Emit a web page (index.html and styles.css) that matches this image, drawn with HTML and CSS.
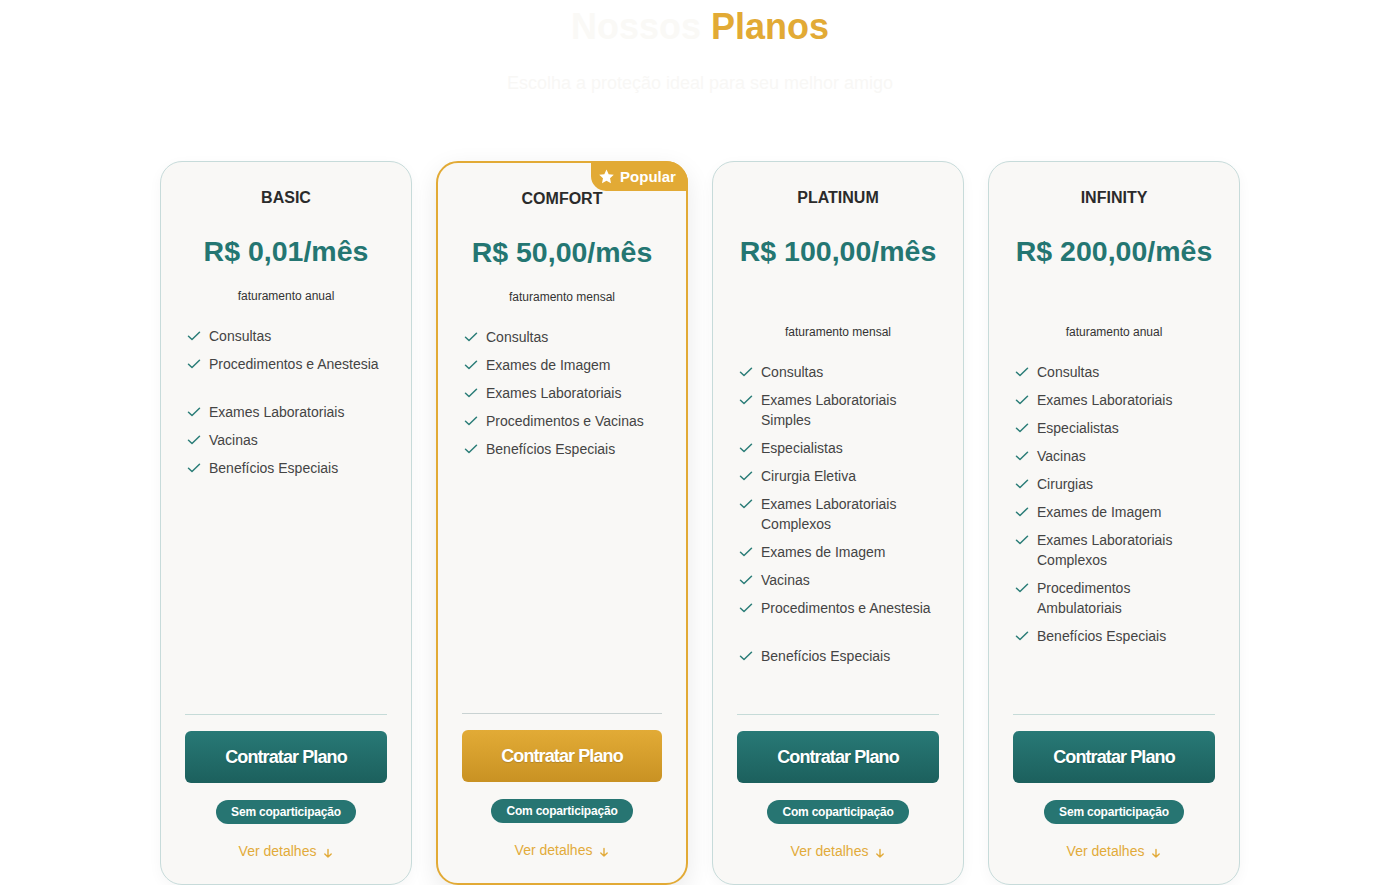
FILE: index.html
```html
<!DOCTYPE html>
<html lang="pt-BR">
<head>
<meta charset="utf-8">
<title>Nossos Planos</title>
<link rel="stylesheet" href="styles.css">
</head>
<body>
<section class="plans">
  <h2 class="plans-title"><span class="muted">Nossos</span> <span class="gold">Planos</span></h2>
  <p class="plans-sub">Escolha a proteção ideal para seu melhor amigo</p>

  <div class="cards">
    <!-- BASIC -->
    <article class="card">
      <h3 class="card-name">BASIC</h3>
      <div class="card-price">R$ 0,01/mês</div>
      <div class="card-billing">faturamento anual</div>
      <ul class="features">
        <li><svg class="chk" viewBox="0 0 14 14"><polyline points="1.5,7.2 5,10.5 12.5,3.2"/></svg><span>Consultas</span></li>
        <li><svg class="chk" viewBox="0 0 14 14"><polyline points="1.5,7.2 5,10.5 12.5,3.2"/></svg><span>Procedimentos e Anestesia<br>&nbsp;</span></li>
        <li><svg class="chk" viewBox="0 0 14 14"><polyline points="1.5,7.2 5,10.5 12.5,3.2"/></svg><span>Exames Laboratoriais</span></li>
        <li><svg class="chk" viewBox="0 0 14 14"><polyline points="1.5,7.2 5,10.5 12.5,3.2"/></svg><span>Vacinas</span></li>
        <li><svg class="chk" viewBox="0 0 14 14"><polyline points="1.5,7.2 5,10.5 12.5,3.2"/></svg><span>Benefícios Especiais</span></li>
      </ul>
      <div class="card-foot">
        <button class="btn">Contratar Plano</button>
        <span class="pill">Sem coparticipação</span>
        <a class="more" href="#">Ver detalhes <svg class="arrow" viewBox="0 0 10 10"><path d="M5 1.5V9M1.8 6L5 9L8.2 6"/></svg></a>
      </div>
    </article>

    <!-- COMFORT -->
    <article class="card card-popular">
      <div class="ribbon"><svg class="star" viewBox="2 2 20 19"><path d="M12 2.2l2.9 6.2 6.8.8-5 4.7 1.3 6.7L12 17.3l-6 3.3 1.3-6.7-5-4.7 6.8-.8z"/></svg>Popular</div>
      <h3 class="card-name">COMFORT</h3>
      <div class="card-price">R$ 50,00/mês</div>
      <div class="card-billing">faturamento mensal</div>
      <ul class="features">
        <li><svg class="chk" viewBox="0 0 14 14"><polyline points="1.5,7.2 5,10.5 12.5,3.2"/></svg><span>Consultas</span></li>
        <li><svg class="chk" viewBox="0 0 14 14"><polyline points="1.5,7.2 5,10.5 12.5,3.2"/></svg><span>Exames de Imagem</span></li>
        <li><svg class="chk" viewBox="0 0 14 14"><polyline points="1.5,7.2 5,10.5 12.5,3.2"/></svg><span>Exames Laboratoriais</span></li>
        <li><svg class="chk" viewBox="0 0 14 14"><polyline points="1.5,7.2 5,10.5 12.5,3.2"/></svg><span>Procedimentos e Vacinas</span></li>
        <li><svg class="chk" viewBox="0 0 14 14"><polyline points="1.5,7.2 5,10.5 12.5,3.2"/></svg><span>Benefícios Especiais</span></li>
      </ul>
      <div class="card-foot">
        <button class="btn btn-gold">Contratar Plano</button>
        <span class="pill">Com coparticipação</span>
        <a class="more" href="#">Ver detalhes <svg class="arrow" viewBox="0 0 10 10"><path d="M5 1.5V9M1.8 6L5 9L8.2 6"/></svg></a>
      </div>
    </article>

    <!-- PLATINUM -->
    <article class="card">
      <h3 class="card-name">PLATINUM</h3>
      <div class="card-price">R$ 100,00/mês</div>
      <div class="card-billing card-billing-low">faturamento mensal</div>
      <ul class="features">
        <li><svg class="chk" viewBox="0 0 14 14"><polyline points="1.5,7.2 5,10.5 12.5,3.2"/></svg><span>Consultas</span></li>
        <li><svg class="chk" viewBox="0 0 14 14"><polyline points="1.5,7.2 5,10.5 12.5,3.2"/></svg><span>Exames Laboratoriais Simples</span></li>
        <li><svg class="chk" viewBox="0 0 14 14"><polyline points="1.5,7.2 5,10.5 12.5,3.2"/></svg><span>Especialistas</span></li>
        <li><svg class="chk" viewBox="0 0 14 14"><polyline points="1.5,7.2 5,10.5 12.5,3.2"/></svg><span>Cirurgia Eletiva</span></li>
        <li><svg class="chk" viewBox="0 0 14 14"><polyline points="1.5,7.2 5,10.5 12.5,3.2"/></svg><span>Exames Laboratoriais Complexos</span></li>
        <li><svg class="chk" viewBox="0 0 14 14"><polyline points="1.5,7.2 5,10.5 12.5,3.2"/></svg><span>Exames de Imagem</span></li>
        <li><svg class="chk" viewBox="0 0 14 14"><polyline points="1.5,7.2 5,10.5 12.5,3.2"/></svg><span>Vacinas</span></li>
        <li><svg class="chk" viewBox="0 0 14 14"><polyline points="1.5,7.2 5,10.5 12.5,3.2"/></svg><span>Procedimentos e Anestesia<br>&nbsp;</span></li>
        <li><svg class="chk" viewBox="0 0 14 14"><polyline points="1.5,7.2 5,10.5 12.5,3.2"/></svg><span>Benefícios Especiais</span></li>
      </ul>
      <div class="card-foot">
        <button class="btn">Contratar Plano</button>
        <span class="pill">Com coparticipação</span>
        <a class="more" href="#">Ver detalhes <svg class="arrow" viewBox="0 0 10 10"><path d="M5 1.5V9M1.8 6L5 9L8.2 6"/></svg></a>
      </div>
    </article>

    <!-- INFINITY -->
    <article class="card">
      <h3 class="card-name">INFINITY</h3>
      <div class="card-price">R$ 200,00/mês</div>
      <div class="card-billing card-billing-low">faturamento anual</div>
      <ul class="features">
        <li><svg class="chk" viewBox="0 0 14 14"><polyline points="1.5,7.2 5,10.5 12.5,3.2"/></svg><span>Consultas</span></li>
        <li><svg class="chk" viewBox="0 0 14 14"><polyline points="1.5,7.2 5,10.5 12.5,3.2"/></svg><span>Exames Laboratoriais</span></li>
        <li><svg class="chk" viewBox="0 0 14 14"><polyline points="1.5,7.2 5,10.5 12.5,3.2"/></svg><span>Especialistas</span></li>
        <li><svg class="chk" viewBox="0 0 14 14"><polyline points="1.5,7.2 5,10.5 12.5,3.2"/></svg><span>Vacinas</span></li>
        <li><svg class="chk" viewBox="0 0 14 14"><polyline points="1.5,7.2 5,10.5 12.5,3.2"/></svg><span>Cirurgias</span></li>
        <li><svg class="chk" viewBox="0 0 14 14"><polyline points="1.5,7.2 5,10.5 12.5,3.2"/></svg><span>Exames de Imagem</span></li>
        <li><svg class="chk" viewBox="0 0 14 14"><polyline points="1.5,7.2 5,10.5 12.5,3.2"/></svg><span>Exames Laboratoriais Complexos</span></li>
        <li><svg class="chk" viewBox="0 0 14 14"><polyline points="1.5,7.2 5,10.5 12.5,3.2"/></svg><span>Procedimentos Ambulatoriais</span></li>
        <li><svg class="chk" viewBox="0 0 14 14"><polyline points="1.5,7.2 5,10.5 12.5,3.2"/></svg><span>Benefícios Especiais</span></li>
      </ul>
      <div class="card-foot">
        <button class="btn">Contratar Plano</button>
        <span class="pill">Sem coparticipação</span>
        <a class="more" href="#">Ver detalhes <svg class="arrow" viewBox="0 0 10 10"><path d="M5 1.5V9M1.8 6L5 9L8.2 6"/></svg></a>
      </div>
    </article>
  </div>
</section>
</body>
</html>
```

FILE: styles.css
```css
* { box-sizing: border-box; }

html, body {
  margin: 0;
  padding: 0;
  background: #ffffff;
  font-family: "Liberation Sans", Arial, sans-serif;
  color: #333;
  overflow: hidden;
}

.plans {
  padding-top: 5px;
}

.plans-title {
  margin: 0;
  text-align: center;
  font-size: 36px;
  line-height: 44px;
  font-weight: 700;
}
.plans-title .muted { color: #faf9f6; }
.plans-title .gold { color: #e2aa35; }

.plans-sub {
  margin: 22px 0 0;
  text-align: center;
  font-size: 18px;
  line-height: 24px;
  color: #f8f7f5;
}

.cards {
  margin-top: 66px;
  display: flex;
  justify-content: center;
  align-items: stretch;
  gap: 24px;
}

.card {
  position: relative;
  width: 252px;
  display: flex;
  flex-direction: column;
  align-items: stretch;
  padding: 24px 24px 23px;
  background: #f9f8f6;
  border: 1px solid #c7dbda;
  border-radius: 22px;
  box-shadow: 0 4px 14px rgba(0, 0, 0, 0.04);
}

.card-popular {
  border: 2px solid #e2aa35;
  padding: 24px 24px 23px;
  box-shadow: 0 8px 26px rgba(0, 0, 0, 0.09);
}

.ribbon {
  position: absolute;
  top: -2px;
  right: -2px;
  width: 97px;
  height: 30px;
  display: flex;
  align-items: center;
  justify-content: center;
  gap: 6px;
  padding-right: 4px;
  background: #e2aa35;
  color: #fff;
  font-size: 15px;
  font-weight: 700;
  border-radius: 0 22px 0 15px;
}
.star {
  width: 15px;
  height: 15px;
  fill: #fff;
}

.card-name {
  margin: 0;
  text-align: center;
  font-size: 16px;
  line-height: 24px;
  font-weight: 700;
  color: #2b2b2b;
}

.card-price {
  margin-top: 23px;
  text-align: center;
  font-size: 28.5px;
  line-height: 36px;
  font-weight: 700;
  color: #247672;
}

.card-billing {
  margin-top: 19px;
  text-align: center;
  font-size: 12px;
  line-height: 16px;
  color: #333;
}
.card-billing-low { margin-top: 55px; }

.features {
  list-style: none;
  margin: 18px 0 44px;
  padding: 0;
}
.features li {
  display: flex;
  align-items: flex-start;
  gap: 8px;
  padding: 4px 0 4px 2px;
  font-size: 14px;
  line-height: 20px;
  color: #444;
}
.chk {
  flex: 0 0 14px;
  width: 14px;
  height: 14px;
  margin-top: 3px;
  fill: none;
  stroke: #2b7d78;
  stroke-width: 1.5;
  stroke-linecap: round;
  stroke-linejoin: round;
}

.card-foot {
  margin-top: auto;
  border-top: 1px solid #c6dbd8;
  padding-top: 16px;
  display: flex;
  flex-direction: column;
  align-items: center;
}
.card-popular .card-foot { border-top-color: #c9d2d2; }

.btn {
  width: 100%;
  height: 52px;
  border: none;
  border-radius: 6px;
  background: linear-gradient(180deg, #287976 0%, #1c605d 100%);
  color: #fff;
  font-family: "Liberation Sans", Arial, sans-serif;
  font-size: 18px;
  font-weight: 700;
  letter-spacing: -0.9px;
  cursor: pointer;
  text-shadow: 0 1px 1px rgba(0, 0, 0, 0.15);
}
.btn-gold {
  background: linear-gradient(180deg, #e2ab36 0%, #c99223 100%);
}

.pill {
  margin-top: 17px;
  height: 24px;
  display: inline-flex;
  align-items: center;
  padding: 0 15px;
  border-radius: 12px;
  background: #277572;
  color: #fff;
  font-size: 12px;
  font-weight: 700;
  letter-spacing: -0.2px;
}

.more {
  margin-top: 17px;
  display: inline-flex;
  align-items: center;
  gap: 7px;
  font-size: 14px;
  line-height: 20px;
  color: #e2ab3a;
  text-decoration: none;
}
.arrow {
  width: 10px;
  height: 10px;
  margin-top: 3px;
  fill: none;
  stroke: #e2ab3a;
  stroke-width: 1.4;
  stroke-linecap: round;
  stroke-linejoin: round;
}
```
